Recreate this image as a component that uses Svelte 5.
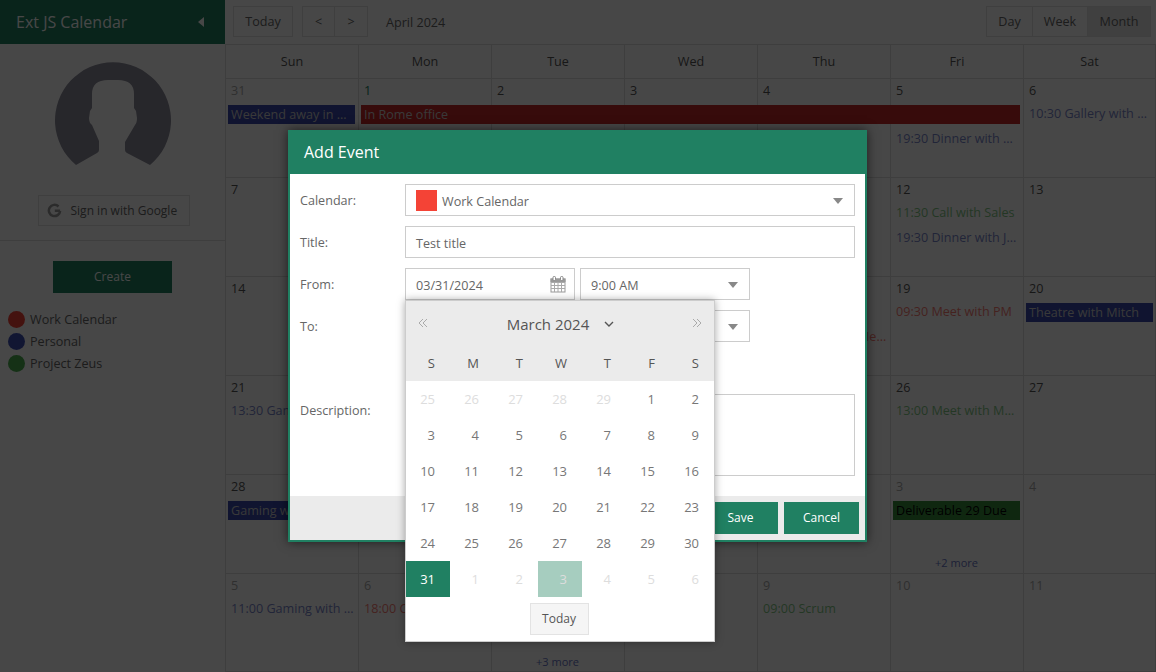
<script>
  const headers = ['Sun', 'Mon', 'Tue', 'Wed', 'Thu', 'Fri', 'Sat'];
  const weeks = [
    {
      days: [[31, 'off'], [1, 'cur'], [2], [3], [4], [5], [6]],
      events: [
        { col: 1, span: 1, row: 2, text: 'Weekend away in Paris', kind: 'bar blue' },
        { col: 2, span: 5, row: 2, text: 'In Rome office', kind: 'bar red' },
        { col: 6, row: 3, text: '19:30 Dinner with Wendy', kind: 'timed blue' },
        { col: 7, row: 2, text: '10:30 Gallery with Mitch', kind: 'timed blue' }
      ]
    },
    {
      days: [[7], [8], [9], [10], [11], [12], [13]],
      events: [
        { col: 6, row: 2, text: '11:30 Call with Sales', kind: 'timed green' },
        { col: 6, row: 3, text: '19:30 Dinner with Jenny', kind: 'timed blue' }
      ]
    },
    {
      days: [[14], [15], [16], [17], [18], [19], [20]],
      events: [
        { col: 5, row: 3, text: '14:00 Lunch with Ieva Ozola', kind: 'timed red' },
        { col: 6, row: 2, text: '09:30 Meet with PM', kind: 'timed red' },
        { col: 7, row: 2, text: 'Theatre with Mitch', kind: 'bar blue' }
      ]
    },
    {
      days: [[21], [22], [23], [24], [25], [26], [27]],
      events: [
        { col: 1, row: 2, text: '13:30 Gaming with Ben', kind: 'timed blue' },
        { col: 6, row: 2, text: '13:00 Meet with Marketing', kind: 'timed green' }
      ]
    },
    {
      days: [[28], [29], [30], [1, 'off'], [2, 'off'], [3, 'off'], [4, 'off']],
      events: [
        { col: 1, row: 2, text: 'Gaming with Ben', kind: 'bar blue' },
        { col: 6, row: 2, text: 'Deliverable 29 Due', kind: 'bar green' },
        { col: 6, row: 5, text: '+2 more', kind: 'more' }
      ]
    },
    {
      days: [[5, 'off'], [6, 'off'], [7, 'off'], [8, 'off'], [9, 'off'], [10, 'off'], [11, 'off']],
      events: [
        { col: 1, row: 2, text: '11:00 Gaming with Ben', kind: 'timed blue' },
        { col: 2, row: 2, text: '18:00 Call with Sales', kind: 'timed red' },
        { col: 3, row: 5, text: '+3 more', kind: 'more' },
        { col: 5, row: 2, text: '09:00 Scrum', kind: 'timed green' }
      ]
    }
  ];
  const calendars = [
    { name: 'Work Calendar', cls: 'red' },
    { name: 'Personal', cls: 'blue' },
    { name: 'Project Zeus', cls: 'green' }
  ];
  const pickerHead = ['S', 'M', 'T', 'W', 'T', 'F', 'S'];
  const pickerDays = [
    [25, 'off'], [26, 'off'], [27, 'off'], [28, 'off'], [29, 'off'], [1], [2],
    [3], [4], [5], [6], [7], [8], [9],
    [10], [11], [12], [13], [14], [15], [16],
    [17], [18], [19], [20], [21], [22], [23],
    [24], [25], [26], [27], [28], [29], [30],
    [31, 'selected'], [1, 'off'], [2, 'off'], [3, 'off now'], [4, 'off'], [5, 'off'], [6, 'off']
  ];
</script>

<div class="page">
  <aside class="sidebar">
    <div class="brand">
      <span>Ext JS Calendar</span>
      <svg class="collapse" width="7" height="10" viewBox="0 0 7 10"><path d="M6 0 L0 5 L6 10 Z" fill="#fff" /></svg>
    </div>
    <div class="profile">
      <svg class="avatar" width="226" height="122" viewBox="0 0 226 122">
        <path transform="translate(0 -61)" fill="#8c8b9a" d="M76 165 A58 58 0 1 1 150 165 L127 153 Q125 152 125 150 L125 142 L135 125 Q137 123 137 118 L136 111 L134 108 L134 94 Q134 80 118 80 L108 80 Q92 80 92 94 L92 108 L90 111 L89 118 Q89 123 92 125 L99 141 L99 150 Q99 152 97 153 Z" />
      </svg>
      <div class="google">
        <svg width="15" height="15" viewBox="0 0 24 24"><path fill="none" stroke="#999" stroke-width="4" d="M21 12.5 H12.5 M21 12.5 A9 9 0 1 1 18.4 5.6" /></svg>
        <span>Sign in with Google</span>
      </div>
    </div>
    <div class="create-wrap"><div class="create">Create</div></div>
    <ul class="calendars">
      {#each calendars as c}
        <li><span class="dot {c.cls}"></span><span class="cal-name">{c.name}</span></li>
      {/each}
    </ul>
  </aside>

  <main class="main">
    <div class="toolbar">
      <div class="btn">Today</div>
      <div class="group nav"><div class="btn">&lt;</div><div class="btn">&gt;</div></div>
      <div class="month-label">April 2024</div>
      <div class="group views">
        <div class="btn v-day">Day</div><div class="btn v-week">Week</div><div class="btn v-month active">Month</div>
      </div>
    </div>
    <div class="head">
      {#each headers as h}<div class="head-cell">{h}</div>{/each}
    </div>
    {#each weeks as w}
      <div class="week">
        {#each w.days as d, i}
          <div class="cell" style="grid-column:{i + 1}"><span class="num {d[1] ?? ''}">{d[0]}</span></div>
        {/each}
        {#each w.events as e}
          <div class="event {e.kind}" style="grid-column:{e.col} / span {e.span ?? 1};grid-row:{e.row}">{e.text}</div>
        {/each}
      </div>
    {/each}
  </main>

  <div class="mask"></div>

  <section class="modal">
    <header class="modal-title">Add Event</header>
    <div class="form">
      <div class="row">
        <span class="label">Calendar:</span>
        <div class="field select"><span class="swatch"></span>Work Calendar<span class="caret"></span></div>
      </div>
      <div class="row">
        <span class="label">Title:</span>
        <div class="field">Test title</div>
      </div>
      <div class="row">
        <span class="label">From:</span>
        <div class="pair">
          <div class="field date">03/31/2024
            <svg class="cal-icon" width="16" height="17" viewBox="0 0 16 17">
              <rect x="1" y="3" width="14" height="13" fill="#fff" stroke="#999" />
              <path d="M1 6.5 H15 M1 9.5 H15 M1 12.5 H15 M4.5 6 V16 M8 6 V16 M11.5 6 V16" stroke="#aaa" fill="none" />
              <rect x="0.5" y="2.5" width="15" height="3.5" fill="#999" />
              <rect x="3" y="0.5" width="2.5" height="4" rx="1" fill="#fff" stroke="#888" />
              <rect x="10.5" y="0.5" width="2.5" height="4" rx="1" fill="#fff" stroke="#888" />
            </svg>
          </div>
          <div class="field select">9:00 AM<span class="caret"></span></div>
        </div>
      </div>
      <div class="row">
        <span class="label">To:</span>
        <div class="pair">
          <div class="field date"></div>
          <div class="field select"><span class="caret"></span></div>
        </div>
      </div>
      <div class="row spacer"></div>
      <div class="row">
        <span class="label">Description:</span>
        <div class="field area"></div>
      </div>
    </div>
    <footer class="modal-foot">
      <div class="action">Save</div>
      <div class="action">Cancel</div>
    </footer>

    <div class="picker">
      <div class="picker-head">
        <div class="picker-title">
          <svg width="10" height="10" viewBox="0 0 10 10"><path d="M5 1 L1 5 L5 9 M9 1 L5 5 L9 9" fill="none" stroke="#aaa" /></svg>
          <div class="title-text">March 2024
            <svg width="10" height="6" viewBox="0 0 10 6"><path d="M1 1 L5 5 L9 1" fill="none" stroke="#555" stroke-width="1.4" /></svg>
          </div>
          <svg width="10" height="10" viewBox="0 0 10 10"><path d="M1 1 L5 5 L1 9 M5 1 L9 5 L5 9" fill="none" stroke="#aaa" /></svg>
        </div>
        <div class="picker-week">
          {#each pickerHead as p}<span>{p}</span>{/each}
        </div>
      </div>
      <div class="picker-days">
        {#each pickerDays as d}<span class="pd {d[1] ?? ''}">{d[0]}</span>{/each}
      </div>
      <div class="picker-foot"><div class="picker-today">Today</div></div>
    </div>
  </section>
</div>

<style>
  :global(body) { margin: 0; }
  .page {
    position: relative;
    display: flex;
    width: 1156px;
    height: 672px;
    overflow: hidden;
    background: #fff;
    font: 12.6px/18px "Open Sans", sans-serif;
    color: #555;
  }
  .sidebar { width: 225px; flex: none; display: flex; flex-direction: column; }
  .brand {
    height: 44px;
    background: #208062;
    color: #fff;
    font-size: 16px;
    display: flex;
    align-items: center;
    justify-content: space-between;
    padding: 0 20px 0 16px;
  }
  .profile {
    height: 196px;
    border-bottom: 1px solid #ddd;
    display: flex;
    flex-direction: column;
    align-items: center;
  }
  .avatar { display: block; margin-top: 17px; flex: none; }
  .google {
    margin-top: 12px;
    margin-left: 2px;
    width: 152px;
    height: 31px;
    box-sizing: border-box;
    border: 1px solid #e3e3e3;
    display: flex;
    align-items: center;
    gap: 9px;
    padding-left: 8px;
    font-size: 12px;
    color: #666;
  }
  .create-wrap { display: flex; justify-content: center; padding-top: 20px; }
  .create {
    width: 119px;
    height: 32px;
    background: #208062;
    color: #fff;
    font-size: 12px;
    display: flex;
    align-items: center;
    justify-content: center;
  }
  .calendars { list-style: none; margin: 0; padding: 15px 0 0 8px; color: #666; }
  .calendars li { display: flex; align-items: center; gap: 5px; height: 22px; }
  .cal-name { padding-top: 2px; }
  .dot { width: 17px; height: 17px; border-radius: 50%; }
  .dot.red { background: #f44336; }
  .dot.blue { background: #3f51b5; }
  .dot.green { background: #4caf50; }

  .main { width: 931px; flex: none; }
  .toolbar {
    height: 44px;
    box-sizing: border-box;
    display: flex;
    align-items: flex-start;
    padding: 6px 5px 0 8px;
    color: #666;
  }
  .btn {
    height: 31px;
    box-sizing: border-box;
    border: 1px solid #e3e3e3;
    background: #fff;
    display: flex;
    align-items: center;
    justify-content: center;
    width: 60px;
  }
  .group { display: flex; }
  .group .btn + .btn { border-left: 0; }
  .nav { margin-left: 9px; }
  .nav .btn { width: 33px; }
  .month-label { margin-left: 18px; line-height: 33px; }
  .views { margin-left: auto; }
  .v-day { width: 47px; }
  .v-week { width: 55px; }
  .v-month { width: 63px; }
  .active { background: #e6e6e6; }

  .head, .week { display: grid; grid-template-columns: repeat(7, 133px); }
  .head { height: 34px; }
  .head-cell {
    border: 1px solid #ddd;
    border-width: 1px 0 0 1px;
    text-align: center;
    line-height: 33px;
  }
  .head-cell:last-child { border-right: 1px solid #ddd; }
  .week { height: 99px; grid-template-rows: 27px 25px 25px 0 22px; }
  .cell {
    grid-row: 1 / 6;
    border: 1px solid #ddd;
    border-width: 1px 0 0 1px;
    padding: 3px 0 0 5px;
    min-height: 0;
  }
  .cell:nth-child(7) { border-right: 1px solid #ddd; }
  .week:last-child .cell { border-bottom: 1px solid #ddd; }
  .num.off { color: #aaa; }
  .num.cur { color: #208062; }
  .event {
    z-index: 1;
    min-width: 0;
    white-space: nowrap;
    overflow: hidden;
    text-overflow: ellipsis;
  }
  .event.bar {
    margin: 0 3px;
    height: 19px;
    line-height: 19px;
    padding: 0 3px;
    color: #ccc;
  }
  .bar.blue { background: #3949ab; }
  .bar.red { background: #c62828; }
  .bar.green { background: #388e3c; color: #000; }
  .event.timed { padding: 0 3px 0 6px; line-height: 18px; opacity: 0.7; }
  .timed.blue { color: #3f51b5; }
  .timed.red { color: #f44336; }
  .timed.green { color: #4caf50; }
  .event.more {
    text-align: center;
    font-size: 11px;
    color: #3f51b5;
    align-self: end;
    margin-bottom: 1px;
    opacity: 0.8;
  }

  .mask { position: absolute; inset: 0; background: rgba(0, 0, 0, 0.72); z-index: 2; }

  .modal {
    position: absolute;
    z-index: 3;
    left: 288px;
    top: 130px;
    width: 579px;
    height: 412px;
    box-sizing: border-box;
    border: 2px solid #208062;
    border-top: 0;
    background: #fff;
    box-shadow: 0 0 10px rgba(0, 0, 0, 0.6);
    display: flex;
    flex-direction: column;
    color: #666;
  }
  .modal-title {
    height: 44px;
    flex: none;
    margin: 0 -2px;
    padding-left: 16px;
    background: #208062;
    color: #fff;
    font-size: 16px;
    line-height: 44px;
  }
  .form {
    flex: 1;
    padding: 10px 10px 0;
    display: flex;
    flex-direction: column;
    gap: 10px;
  }
  .row { display: flex; min-height: 32px; }
  .label { width: 105px; height: 32px; flex: none; line-height: 34px; }
  .field {
    flex: 1;
    height: 32px;
    box-sizing: border-box;
    border: 1px solid #ccc;
    padding: 3px 10px 0;
    display: flex;
    align-items: center;
    position: relative;
    line-height: 26px;
  }
  .pair { display: flex; gap: 5px; }
  .pair .field { width: 170px; flex: none; }
  .swatch { width: 21px; height: 21px; background: #f44336; margin: -2px 5px 0 0; }
  .caret {
    position: absolute;
    right: 11px;
    top: 13px;
    border: 5px solid transparent;
    border-top: 6px solid #888;
    border-bottom: 0;
  }
  .cal-icon { position: absolute; right: 8px; top: 7px; }
  .area { height: 82px; }
  .modal-foot {
    height: 44px;
    flex: none;
    box-sizing: border-box;
    background: #ebebeb;
    padding: 6px;
    display: flex;
    justify-content: flex-end;
    gap: 6px;
  }
  .action {
    width: 75px;
    background: #208062;
    color: #fff;
    display: flex;
    align-items: center;
    justify-content: center;
    font-size: 12px;
  }

  .picker {
    position: absolute;
    left: 115px;
    top: 170px;
    width: 310px;
    height: 342px;
    box-sizing: border-box;
    border: 1px solid #ccc;
    background: #fff;
    box-shadow: 0 0 8px rgba(0, 0, 0, 0.35);
    z-index: 4;
  }
  .picker-head { height: 80px; background: #ebebeb; }
  .picker-title {
    height: 44px;
    padding: 0 12px;
    display: flex;
    align-items: center;
    justify-content: space-between;
  }
  .title-text {
    font-size: 15px;
    color: #555;
    display: flex;
    align-items: center;
    gap: 15px;
    margin-left: 1px;
    padding-top: 1px;
  }
  .picker-week, .picker-days { display: grid; grid-template-columns: repeat(7, 44px); }
  .picker-week span {
    height: 36px;
    line-height: 36px;
    text-align: right;
    padding-right: 15px;
    box-sizing: border-box;
    color: #555;
    font-size: 13px;
  }
  .pd {
    height: 36px;
    line-height: 36px;
    text-align: right;
    padding-right: 15px;
    box-sizing: border-box;
    color: #777;
    font-size: 13px;
  }
  .pd.off { color: #ddd; }
  .pd.selected { background: #208062; color: #fff; }
  .pd.now { background: #a6cdbf; }
  .picker-foot { display: flex; justify-content: center; padding: 6px 2px 0 0; }
  .picker-today {
    width: 59px;
    height: 32px;
    box-sizing: border-box;
    border: 1px solid #e3e3e3;
    background: #f5f5f5;
    font-size: 12px;
    color: #555;
    display: flex;
    align-items: center;
    justify-content: center;
  }
</style>
